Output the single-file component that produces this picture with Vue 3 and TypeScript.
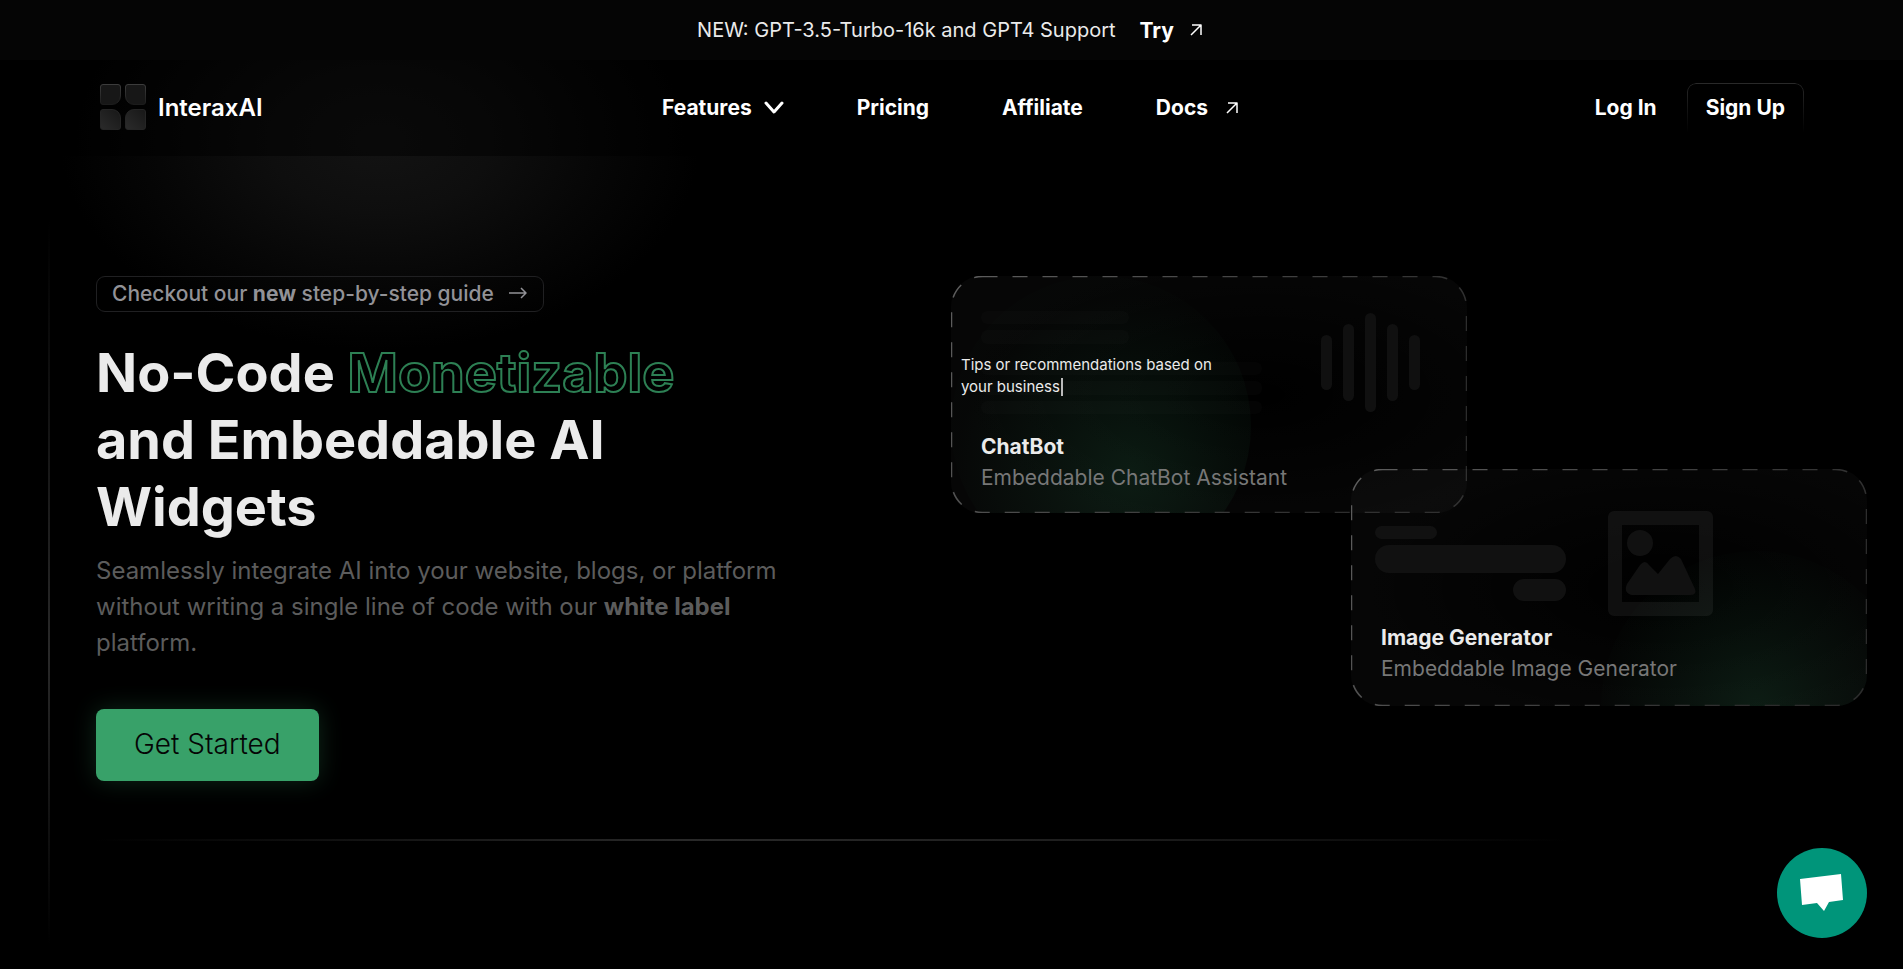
<script setup lang="ts">
interface Bar { x: number; y: number; w: number; h: number }

const chatLines: Bar[] = [
  { x: 30, y: 35, w: 148, h: 13 },
  { x: 30, y: 54, w: 148, h: 14 },
  { x: 30, y: 86, w: 281, h: 13 },
  { x: 30, y: 105, w: 281, h: 14 },
  { x: 30, y: 125, w: 281, h: 13 },
]
const waveBars: Bar[] = [
  { x: 370, y: 59, w: 11, h: 55 },
  { x: 392, y: 48, w: 11, h: 77 },
  { x: 414, y: 37, w: 11, h: 99 },
  { x: 436, y: 48, w: 11, h: 77 },
  { x: 458, y: 59, w: 11, h: 55 },
]
const promptBars: Bar[] = [
  { x: 24, y: 57, w: 62, h: 13 },
  { x: 24, y: 76, w: 191, h: 28 },
  { x: 162, y: 110, w: 53, h: 22 },
]
</script>

<template>
  <div class="page">
    <div class="glow" aria-hidden="true"></div>

    <div class="banner">
      <span>NEW: GPT-3.5-Turbo-16k and GPT4 Support</span>
      <a href="#try" class="try">
        Try
        <svg class="arrow" viewBox="0 0 12 12"><path d="M1 11 11 1M2 1h9v10" /></svg>
      </a>
    </div>

    <header class="header">
      <a href="#home" class="brand">
        <svg class="logo" width="46" height="46" viewBox="0 0 46 46" aria-hidden="true">
          <defs>
            <linearGradient id="tile" x1="0" y1="0" x2="0" y2="1">
              <stop offset="0" stop-color="#3c3c3c" />
              <stop offset="1" stop-color="#1c1c1c" />
            </linearGradient>
            <linearGradient id="tileLow" x1="0" y1="1" x2="1" y2="0">
              <stop offset="0" stop-color="#2b2b2b" />
              <stop offset="1" stop-color="#171717" />
            </linearGradient>
          </defs>
          <path class="tile" d="M3 .5h15a2.500 2.500 0 0 1 2.500 2.500v9a8.500 8.500 0 0 1-8.500 8.500H3A2.500 2.500 0 0 1 .5 18V3A2.500 2.500 0 0 1 3 .5Z" />
          <path class="tile" d="M28 .5h15A2.500 2.500 0 0 1 45.500 3v15a2.500 2.500 0 0 1-2.500 2.500h-9a8.500 8.500 0 0 1-8.500-8.500V3A2.500 2.500 0 0 1 28 .5Z" />
          <path class="tile low" d="M3 25.500h9a8.500 8.500 0 0 1 8.500 8.500v9a2.500 2.500 0 0 1-2.500 2.500H3A2.500 2.500 0 0 1 .5 43V28A2.500 2.500 0 0 1 3 25.500Z" />
          <path class="tile low" d="M34 25.500h9a2.500 2.500 0 0 1 2.500 2.500v15a2.500 2.500 0 0 1-2.500 2.500H28a2.500 2.500 0 0 1-2.500-2.500v-9a8.500 8.500 0 0 1 8.500-8.500Z" />
        </svg>
        InteraxAI
      </a>
      <nav class="nav">
        <button type="button" class="link">
          Features
          <svg class="chevron" viewBox="0 0 20 14"><path d="m2 2 8 9 8-9" /></svg>
        </button>
        <a href="#pricing" class="link">Pricing</a>
        <a href="#affiliate" class="link">Affiliate</a>
        <a href="#docs" class="link docs">
          Docs
          <svg class="arrow" viewBox="0 0 12 12"><path d="M1 11 11 1M2 1h9v10" /></svg>
        </a>
      </nav>
      <div class="account">
        <a href="#login" class="link">Log In</a>
        <a href="#signup" class="link signup">Sign Up</a>
      </div>
    </header>

    <main class="hero">
      <section class="intro">
        <a href="#guide" class="guide">
          <span>Checkout our <b>new</b> step-by-step guide</span>
          <svg width="18" height="12" viewBox="0 0 18 12"><path d="M0 6h17M12 1l5 5-5 5" /></svg>
        </a>
        <h1>No-Code <span class="outline">Monetizable</span><br />and Embeddable AI<br />Widgets</h1>
        <p>Seamlessly integrate AI into your website, blogs, or platform without writing a single line of code with our <b>white label</b> platform.</p>
        <button type="button" class="cta">Get Started</button>
      </section>

      <section class="cards">
        <article class="card chat">
          <svg class="art" viewBox="0 0 516 237" aria-hidden="true">
            <defs>
              <linearGradient id="edge" x1="0" y1="0" x2="1" y2="0.300">
                <stop offset="0" stop-color="#5e5e5e" />
                <stop offset="1" stop-color="#2c2c2c" />
              </linearGradient>
              <radialGradient id="sheen" cx="0.600" cy="0.500" r="0.600">
                <stop offset="0" stop-color="#fff" stop-opacity="0" />
                <stop offset="1" stop-color="#fff" stop-opacity="0.025" />
              </radialGradient>
              <radialGradient id="chatGreen" gradientUnits="userSpaceOnUse" cx="180" cy="195" r="175">
                <stop offset="0" stop-color="#38a169" stop-opacity="0.150" />
                <stop offset="0.500" stop-color="#38a169" stop-opacity="0.075" />
                <stop offset="1" stop-color="#38a169" stop-opacity="0.010" />
              </radialGradient>
              <radialGradient id="imageGreen">
                <stop offset="0" stop-color="#38a169" stop-opacity="0.150" />
                <stop offset="0.500" stop-color="#38a169" stop-opacity="0.075" />
                <stop offset="1" stop-color="#38a169" stop-opacity="0.010" />
              </radialGradient>
              <clipPath id="frame"><rect width="516" height="237" rx="31" /></clipPath>
            </defs>
            <rect width="516" height="237" rx="31" fill="url(#sheen)" />
            <circle cx="150" cy="150" r="150" fill="url(#chatGreen)" clip-path="url(#frame)" />
            <rect v-for="(b, i) in chatLines" :key="i" :x="b.x" :y="b.y" :width="b.w" :height="b.h" rx="6" fill="#fff" fill-opacity="0.015" />
            <rect v-for="(b, i) in waveBars" :key="'w' + i" :x="b.x" :y="b.y" :width="b.w" :height="b.h" rx="5.500" fill="#101010" />
            <rect class="dash" x="0.500" y="0.500" width="515" height="236" rx="31" />
          </svg>
          <p class="typed">Tips or recommendations based on your business<i class="caret"></i></p>
          <div class="caption">
            <h2>ChatBot</h2>
            <span>Embeddable ChatBot Assistant</span>
          </div>
        </article>

        <article class="card image">
          <svg class="art" viewBox="0 0 516 237" aria-hidden="true">
            <rect width="516" height="237" rx="31" fill="url(#sheen)" />
            <circle cx="405" cy="237" r="155" fill="url(#imageGreen)" clip-path="url(#frame)" />
            <rect v-for="(b, i) in promptBars" :key="i" :x="b.x" :y="b.y" :width="b.w" :height="b.h" :rx="b.h / 2" fill="#111" />
            <path d="M263 42h93a6 6 0 0 1 6 6v93a6 6 0 0 1-6 6h-93a6 6 0 0 1-6-6V48a6 6 0 0 1 6-6Zm8 14v77h77V56Z" fill="#fff" fill-opacity="0.060" fill-rule="evenodd" />
            <circle cx="289" cy="74" r="13" fill="#111" />
            <path d="m276 115 13-19q5-6 9 0l9 9 12-15q6-6 11 0l14 30q2 6-5 6h-58q-9-2-5-11Z" fill="#111" />
            <rect class="dash" x="0.500" y="0.500" width="515" height="236" rx="31" />
          </svg>
          <div class="caption">
            <h2>Image Generator</h2>
            <span>Embeddable Image Generator</span>
          </div>
        </article>
      </section>
    </main>

    <div class="rule" aria-hidden="true"></div>
    <div class="side-rule" aria-hidden="true"></div>

    <button type="button" class="support" aria-label="Open chat">
      <svg width="44" height="38" viewBox="0 0 44 38"><path d="M0 5 41 0l2 26-14 2-5 9-7-8-15 2Z" fill="#fff" /></svg>
    </button>
  </div>
</template>

<style>
body {
  background: #000;
}
</style>

<style scoped>
.page {
  position: relative;
  display: flex;
  flex-direction: column;
  min-height: 100vh;
  overflow: hidden;
  background: #000;
  color: #fff;
  font-family: Inter, "Liberation Sans", sans-serif;
}
.page * {
  box-sizing: border-box;
}
a {
  color: inherit;
  text-decoration: none;
}
button {
  border: 0;
  padding: 0;
  background: none;
  color: inherit;
  font: inherit;
  cursor: pointer;
}
.glow {
  position: absolute;
  top: -70px;
  left: 60px;
  width: 640px;
  height: 420px;
  background: radial-gradient(closest-side, #131313, #0e0e0e 35%, #060606 70%, transparent);
}
.banner {
  position: relative;
  display: flex;
  align-items: center;
  justify-content: center;
  gap: 24px;
  height: 60px;
  padding-right: 4px;
  background: #050505;
  color: #ebebeb;
  font-size: 20px;
}
.try {
  display: flex;
  align-items: center;
  gap: 16px;
  color: #fff;
  font-size: 21px;
  font-weight: 700;
}
.arrow {
  width: 12px;
  height: 12px;
}
svg path {
  stroke-linejoin: round;
}
.arrow path,
.guide path {
  fill: none;
  stroke: currentColor;
  stroke-width: 1.500;
}
.header {
  position: relative;
  display: grid;
  grid-template-columns: 1fr auto 1fr;
  align-items: center;
  height: 96px;
  padding: 0 99px 0 100px;
  background: rgb(0 0 0 / 50%);
}
.brand {
  display: flex;
  align-items: center;
  gap: 12px;
  padding-bottom: 2px;
  font-size: 24px;
  font-weight: 600;
}
.tile {
  fill: #171717;
  stroke: url(#tile);
}
.tile.low {
  fill: url(#tileLow);
  stroke: #252525;
}
.nav {
  display: flex;
  gap: 73px;
  padding-right: 4px;
}
.link {
  display: flex;
  align-items: center;
  font-size: 21px;
  line-height: 28px;
  font-weight: 700;
}
.chevron {
  width: 20px;
  height: 14px;
  margin-left: 12px;
}
.chevron path {
  fill: none;
  stroke: currentColor;
  stroke-width: 3;
  stroke-linecap: round;
}
.docs {
  gap: 18px;
}
.account {
  display: flex;
  justify-content: flex-end;
  align-items: center;
  gap: 30px;
}
.signup {
  position: relative;
  height: 50px;
  padding: 0 19px;
}
.signup::before {
  content: "";
  position: absolute;
  inset: 0;
  border: 1px solid #292929;
  border-bottom: 0;
  border-radius: 9px 9px 0 0;
  mask-image: linear-gradient(#000, transparent);
}
.hero {
  position: relative;
  display: grid;
  grid-template-columns: minmax(0, 14fr) minmax(0, 15fr);
  padding: 120px 36px 0 96px;
}
.intro {
  display: flex;
  flex-direction: column;
  align-items: flex-start;
}
.guide {
  display: flex;
  align-items: center;
  gap: 15px;
  height: 36px;
  padding: 0 16px 2px 15px;
  border: 1px solid #202022;
  border-radius: 9px;
  color: #929297;
  font-size: 21px;
  font-weight: 500;
}
h1 {
  margin: 27px 0 0;
  color: #ebebeb;
  font-size: 54px;
  line-height: 67px;
  font-weight: 700;
}
.outline {
  color: transparent;
  -webkit-text-stroke: 2px #2d8054;
}
p {
  margin: 0;
}
.intro p {
  max-width: 720px;
  margin-top: 13px;
  color: #5c5c5c;
  font-size: 24px;
  line-height: 36px;
}
.cta {
  height: 72px;
  margin-top: 48px;
  padding: 0 38px 2px;
  border-radius: 8px;
  background: #38a169;
  box-shadow: 0 0 24px rgb(56 161 105 / 25%);
  color: #050505;
  font-size: 28px;
  font-weight: 300;
}
.cards {
  display: flex;
  flex-direction: column;
}
.card {
  position: relative;
  width: 516px;
  height: 237px;
}
.image {
  align-self: flex-end;
  margin-top: -44px;
}
.art {
  position: absolute;
  inset: 0;
  width: 100%;
  height: 100%;
}
.dash {
  fill: none;
  stroke: url(#edge);
  stroke-width: 1.500;
  stroke-dasharray: 15 15;
}
.typed {
  position: absolute;
  top: 78px;
  left: 10px;
  width: 270px;
  color: #ebebeb;
  font-size: 15px;
  line-height: 22px;
}
.caret {
  display: inline-block;
  width: 2px;
  height: 18px;
  margin-left: 1px;
  background: #bbb;
  vertical-align: -4px;
}
.caption {
  position: absolute;
  bottom: 20px;
  left: 30px;
  color: #777;
  font-size: 21px;
  line-height: 30px;
}
.image .caption {
  bottom: 22px;
}
h2 {
  margin: 0;
  color: #ebebeb;
  font-size: 21px;
  line-height: 32px;
  font-weight: 700;
}
.rule {
  height: 2px;
  margin: 58px 336px 0 96px;
  background: linear-gradient(90deg, transparent, #292929 40%, #1d1d1d 70%, transparent);
}
.side-rule {
  position: absolute;
  top: 220px;
  bottom: 24px;
  left: 48px;
  width: 2px;
  background: linear-gradient(transparent, #292929 60%, transparent);
}
.support {
  position: fixed;
  right: 36px;
  bottom: 31px;
  display: flex;
  align-items: center;
  justify-content: center;
  width: 90px;
  height: 90px;
  border-radius: 50%;
  background: #00957a;
}
</style>
